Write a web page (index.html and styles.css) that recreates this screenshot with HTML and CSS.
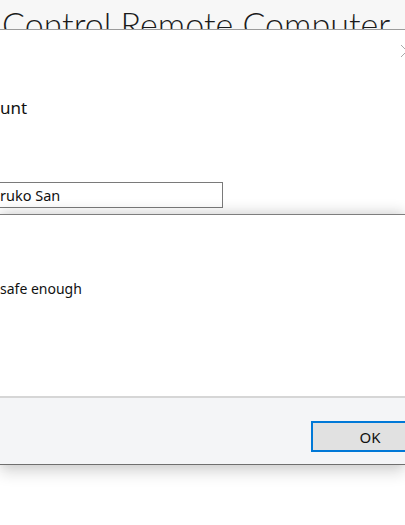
FILE: index.html
```html
<!DOCTYPE html>
<html>
<head>
<meta charset="utf-8">
<link rel="stylesheet" href="styles.css">
</head>
<body>
<div class="page">
  <header class="appbar">
    <h1 class="apptitle">Control Remote Computer</h1>
  </header>
  <section class="dialog first">
    <div class="closerow">
      <svg class="closeicon" width="14" height="14" viewBox="0 0 14 14"><path d="M1 1 L13 13 M13 1 L1 13" stroke="#a8a8a8" stroke-width="1" fill="none"/></svg>
    </div>
    <h2 class="heading">unt</h2>
    <div class="field">ruko San</div>
  </section>
  <section class="dialog second">
    <div class="body">
      <p class="message">safe enough</p>
    </div>
    <footer class="footer">
      <button class="okbtn">OK</button>
    </footer>
  </section>
</div>
</body>
</html>
```
FILE: styles.css
```css
html, body {
  margin: 0;
  padding: 0;
  background: #ffffff;
  overflow: hidden;
  width: 405px;
  height: 525px;
}
.page {
  font-family: "Noto Sans", "Open Sans", sans-serif;
  color: #000;
}
.appbar {
  height: 29px;
  overflow: hidden;
  background: #f7f7f7;
}
.apptitle {
  margin: 0;
  padding-left: 2px;
  font-family: "Lato", "Open Sans", sans-serif;
  font-weight: 300;
  font-size: 34px;
  line-height: 44px;
  margin-top: 2px;
  color: #1b1b1b;
  white-space: nowrap;
}
.dialog.first {
  border-top: 1px solid #9c9c9c;
  height: 185px;
  background: #fff;
  box-sizing: border-box;
}
.closerow {
  display: flex;
  justify-content: flex-end;
  margin-right: -9px;
  padding-top: 14px;
  height: 14px;
}
.closeicon { display: block; }
.heading {
  margin: 38px 0 0 0;
  font-weight: 400;
  font-size: 17px;
  line-height: 24px;
  color: #111;
}
.field {
  margin-top: 62px;
  margin-left: -2px;
  width: 225px;
  height: 26px;
  box-sizing: border-box;
  border: 1px solid #7a7a7a;
  padding-left: 1px;
  font-size: 14.5px;
  line-height: 24px;
  color: #111;
}
.dialog.second {
  position: relative;
  border-top: 1px solid #7e7e7e;
  box-shadow: 0 -3px 12px rgba(0,0,0,0.14), 0 8px 14px rgba(0,0,0,0.14);
  background: #fff;
}
.body {
  height: 181px;
  overflow: hidden;
}
.message {
  margin: 0;
  padding-top: 63px;
  font-size: 14px;
  line-height: 22px;
  color: #111;
}
.footer {
  border-top: 2px solid #d6d6d6;
  border-bottom: 1px solid #6f6f6f;
  background: #f4f5f7;
  height: 69px;
  box-sizing: border-box;
  padding-top: 23px;
  padding-left: 311px;
}
.okbtn {
  display: block;
  width: 118px;
  height: 31px;
  box-sizing: border-box;
  border: 2px solid #0078d7;
  background: #e1e1e1;
  font-family: "Noto Sans", "Open Sans", sans-serif;
  font-size: 15px;
  color: #111;
  padding: 0;
  margin: 0;
}
```
